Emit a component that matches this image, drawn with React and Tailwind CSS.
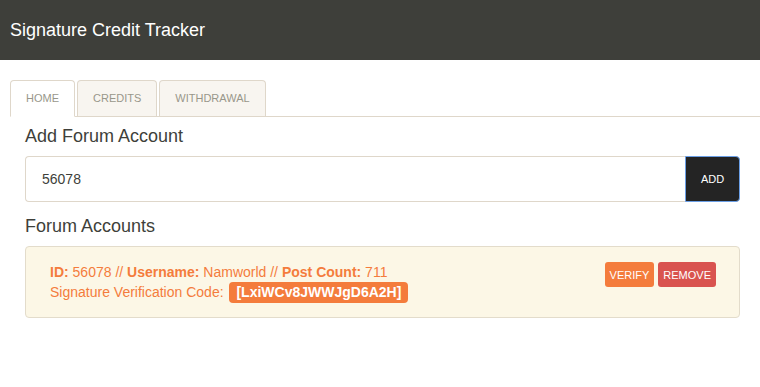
export default function App() {
  return (
    <div className="min-h-[387px] bg-white font-['Liberation_Sans',Arial,sans-serif] text-[#3e3f3a]">
      <nav className="h-[60px] bg-[#3e3f3a] flex items-center px-[10px]">
        <span className="text-white text-[18px] leading-none">Signature Credit Tracker</span>
      </nav>
      <div className="pl-[10px] pt-[20px]">
        <ul className="flex border-b border-[#dfd7ca] h-[37px]">
          <li className="mr-[2px] -mb-px">
            <span className="block h-[37px] px-[15px] leading-[35px] text-[11px] text-[#98978b] bg-white border border-[#dfd7ca] border-b-white rounded-t-[4px]">HOME</span>
          </li>
          <li className="mr-[2px]">
            <span className="block h-[36px] px-[15px] leading-[35px] text-[11px] text-[#98978b] bg-[#f8f5f0] border border-[#dfd7ca] border-b-0 rounded-t-[4px]">CREDITS</span>
          </li>
          <li className="mr-[2px]">
            <span className="block h-[36px] px-[15px] leading-[35px] text-[11px] text-[#98978b] bg-[#f8f5f0] border border-[#dfd7ca] border-b-0 rounded-t-[4px]">WITHDRAWAL</span>
          </li>
        </ul>
        <div className="pl-[15px] pr-[20px]">
          <h4 className="text-[18px] leading-[20px] mt-[9px] mb-[10px]">Add Forum Account</h4>
          <div className="flex h-[46px]">
            <div className="flex-1 border border-[#dfd7ca] border-r-0 rounded-l-[4px] flex items-center pl-[16px] text-[14px] text-[#3e3f3a]">56078</div>
            <button className="w-[55px] bg-[#242424] border border-[#6b9fe6] rounded-r-[4px] text-white text-[11px]">ADD</button>
          </div>
          <h4 className="text-[18px] leading-[20px] mt-[14px] mb-[10px]">Forum Accounts</h4>
          <div className="border border-[#e3dccb] bg-[#fcf7e6] rounded-[4px] pt-[15px] pb-[14px] pl-[24px] pr-[23px] flex justify-between text-[14px] leading-[20px] text-[#f47c3c]">
            <div>
              <div><b>ID:</b> 56078 // <b>Username:</b> Namworld // <b>Post Count:</b> 711</div>
              <div>Signature Verification Code: <span className="inline-block ml-[2px] px-[7px] leading-[21px] rounded-[4px] bg-[#f47c3c] text-white font-bold">[LxiWCv8JWWJgD6A2H]</span></div>
            </div>
            <div className="flex gap-[4px] items-start">
              <button className="h-[25px] px-[5px] rounded-[3px] bg-[#f47c3c] text-white text-[11px]">VERIFY</button>
              <button className="h-[25px] px-[5px] rounded-[3px] bg-[#d9534f] text-white text-[11px]">REMOVE</button>
            </div>
          </div>
        </div>
      </div>
    </div>
  );
}
